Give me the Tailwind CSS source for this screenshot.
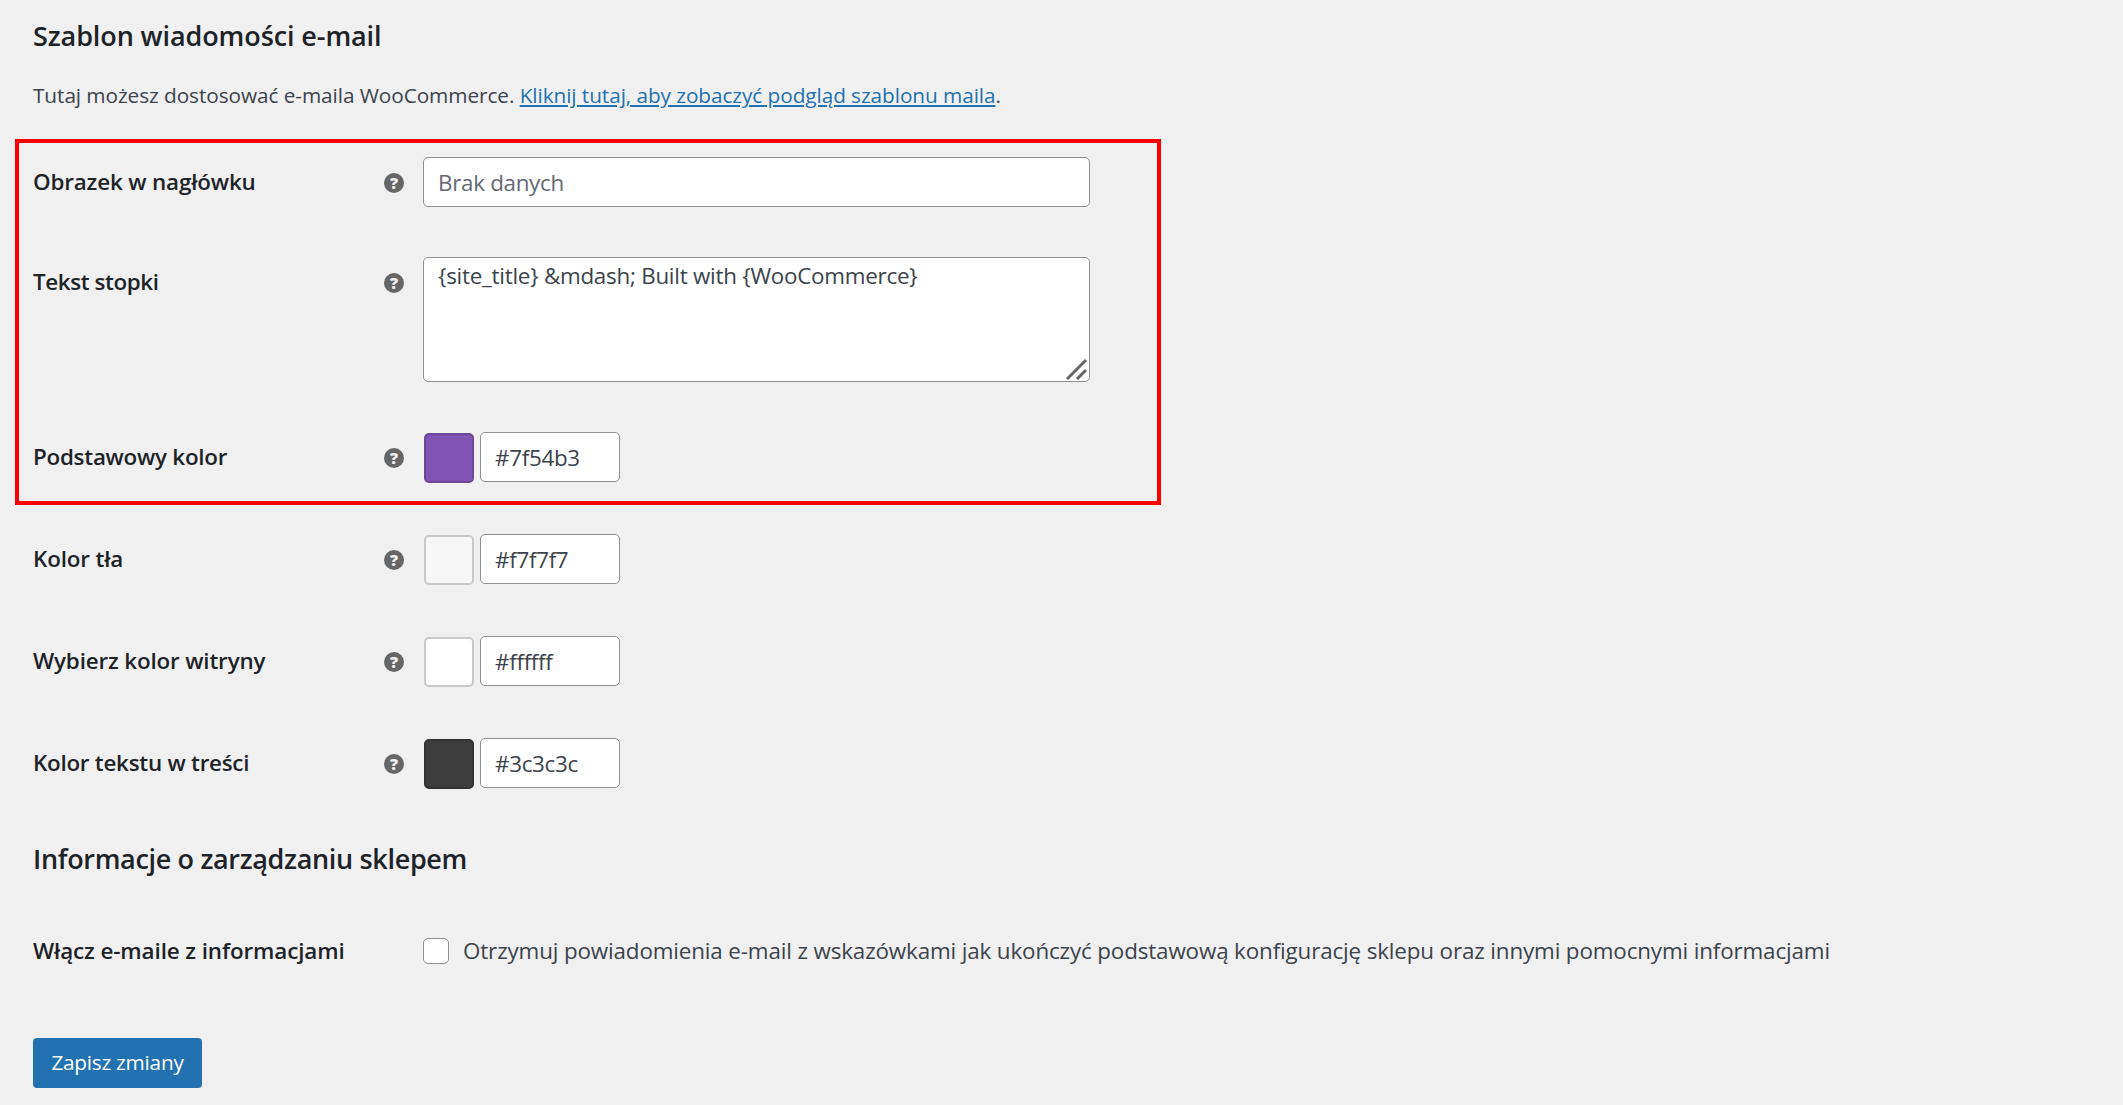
<!DOCTYPE html>
<html lang="pl">
<head>
    <meta charset="UTF-8">
    <meta name="viewport" content="width=device-width, initial-scale=1.0">
    <title>Szablon wiadomości e-mail</title>
    <script src="https://cdn.jsdelivr.net/npm/@tailwindcss/browser@4"></script>
</head>
<body class="bg-[#f0f0f1] text-[#3c434a] font-['Open_Sans',sans-serif] text-[22.4px] h-[1105px] overflow-hidden relative">
    <div class="pl-[33px]">
        <h2 class="text-[#1d2327] text-[27px] font-semibold h-[72px] leading-[72px] tracking-[-0.1px]">Szablon wiadomości e-mail</h2>
        <p class="h-[85px] leading-[46px] mt-0 text-[20.8px] tracking-[-0.08px]">Tutaj możesz dostosować e-maila WooCommerce. <a href="#" class="text-[#2271b1] underline">Kliknij tutaj, aby zobaczyć podgląd szablonu maila</a>.</p>

        <div class="flex items-start h-[100px]">
            <label class="w-[350px] font-semibold text-[#1d2327] leading-[50px] tracking-[-0.15px]">Obrazek w nagłówku</label>
            <div class="w-[40px] h-[50px] pl-[1px] pt-[1px] flex items-center"><span class="w-[20px] h-[20px] rounded-full bg-[#666] flex items-center justify-center text-[#f0f0f1] text-[16px] leading-none font-extrabold">?</span></div>
            <input type="text" placeholder="Brak danych" class="w-[667px] h-[50px] bg-white border border-[#8c8f94] rounded-[5px] px-[14px] placeholder:text-[#646970] tracking-[-0.3px]">
        </div>

        <div class="flex items-start h-[175px]">
            <label class="w-[350px] font-semibold text-[#1d2327] leading-[50px] tracking-[-0.4px]">Tekst stopki</label>
            <div class="w-[40px] h-[50px] pl-[1px] pt-[1px] flex items-center"><span class="w-[20px] h-[20px] rounded-full bg-[#666] flex items-center justify-center text-[#f0f0f1] text-[16px] leading-none font-extrabold">?</span></div>
            <div class="relative w-[667px] h-[125px]">
                <textarea class="w-full h-full block bg-white border border-[#8c8f94] rounded-[5px] px-[14px] py-[1px] resize-none tracking-[-0.25px]">{site_title} &amp;mdash; Built with {WooCommerce}</textarea>
                <svg class="absolute right-[2px] bottom-[2px] w-[22px] h-[22px]" viewBox="0 0 22 22" stroke="#666" stroke-width="3"><path d="M1 21 20 2M11 21l9-9"/></svg>
            </div>
        </div>

        <div class="flex items-start h-[102px]">
            <label class="w-[350px] font-semibold text-[#1d2327] leading-[50px] tracking-[-0.25px]">Podstawowy kolor</label>
            <div class="w-[40px] h-[50px] pl-[1px] pt-[1px] flex items-center"><span class="w-[20px] h-[20px] rounded-full bg-[#666] flex items-center justify-center text-[#f0f0f1] text-[16px] leading-none font-extrabold">?</span></div>
            <div class="flex gap-[6px] pl-[1px]">
                <span class="block w-[50px] h-[50px] mt-[1px] rounded-[5px] bg-[#7f54b3] border-2 border-[#6b4699]"></span>
                <input type="text" value="#7f54b3" class="w-[140px] h-[50px] bg-white border border-[#8c8f94] rounded-[5px] px-[14px] tracking-[-0.3px]">
            </div>
        </div>

        <div class="flex items-start h-[102px]">
            <label class="w-[350px] font-semibold text-[#1d2327] leading-[50px] tracking-[-0.15px]">Kolor tła</label>
            <div class="w-[40px] h-[50px] pl-[1px] pt-[1px] flex items-center"><span class="w-[20px] h-[20px] rounded-full bg-[#666] flex items-center justify-center text-[#f0f0f1] text-[16px] leading-none font-extrabold">?</span></div>
            <div class="flex gap-[6px] pl-[1px]">
                <span class="block w-[50px] h-[50px] mt-[1px] rounded-[5px] bg-[#f7f7f7] border-2 border-[#c9c9c9]"></span>
                <input type="text" value="#f7f7f7" class="w-[140px] h-[50px] bg-white border border-[#8c8f94] rounded-[5px] px-[14px] tracking-[-0.3px]">
            </div>
        </div>

        <div class="flex items-start h-[102px]">
            <label class="w-[350px] font-semibold text-[#1d2327] leading-[50px] tracking-[-0.15px]">Wybierz kolor witryny</label>
            <div class="w-[40px] h-[50px] pl-[1px] pt-[1px] flex items-center"><span class="w-[20px] h-[20px] rounded-full bg-[#666] flex items-center justify-center text-[#f0f0f1] text-[16px] leading-none font-extrabold">?</span></div>
            <div class="flex gap-[6px] pl-[1px]">
                <span class="block w-[50px] h-[50px] mt-[1px] rounded-[5px] bg-white border-2 border-[#c9c9c9]"></span>
                <input type="text" value="#ffffff" class="w-[140px] h-[50px] bg-white border border-[#8c8f94] rounded-[5px] px-[14px] tracking-[-0.3px]">
            </div>
        </div>

        <div class="flex items-start h-[92px]">
            <label class="w-[350px] font-semibold text-[#1d2327] leading-[50px] tracking-[-0.25px]">Kolor tekstu w treści</label>
            <div class="w-[40px] h-[50px] pl-[1px] pt-[1px] flex items-center"><span class="w-[20px] h-[20px] rounded-full bg-[#666] flex items-center justify-center text-[#f0f0f1] text-[16px] leading-none font-extrabold">?</span></div>
            <div class="flex gap-[6px] pl-[1px]">
                <span class="block w-[50px] h-[50px] mt-[1px] rounded-[5px] bg-[#3c3c3c] border-2 border-[#333333]"></span>
                <input type="text" value="#3c3c3c" class="w-[140px] h-[50px] bg-white border border-[#8c8f94] rounded-[5px] px-[14px] tracking-[-0.3px]">
            </div>
        </div>

        <h2 class="text-[#1d2327] text-[27px] font-semibold h-[96px] leading-[58px] tracking-[-0.33px]">Informacje o zarządzaniu sklepem</h2>

        <div class="flex items-center h-[50px]">
            <label class="w-[390px] font-semibold text-[#1d2327] tracking-[-0.1px]">Włącz e-maile z informacjami</label>
            <input type="checkbox" class="appearance-none block w-[26px] h-[26px] bg-white border border-[#8c8f94] rounded-[5px]">
            <span class="ml-[14px] tracking-[-0.14px]">Otrzymuj powiadomienia e-mail z wskazówkami jak ukończyć podstawową konfigurację sklepu oraz innymi pomocnymi informacjami</span>
        </div>

        <button class="block mt-[62px] w-[169px] h-[50px] bg-[#2271b1] text-white text-[20.8px] rounded-[4px] tracking-[-0.25px]">Zapisz zmiany</button>
    </div>

    <div class="absolute left-[15px] top-[139px] w-[1146px] h-[366px] border-4 border-[#ff0000] pointer-events-none"></div>
</body>
</html>
